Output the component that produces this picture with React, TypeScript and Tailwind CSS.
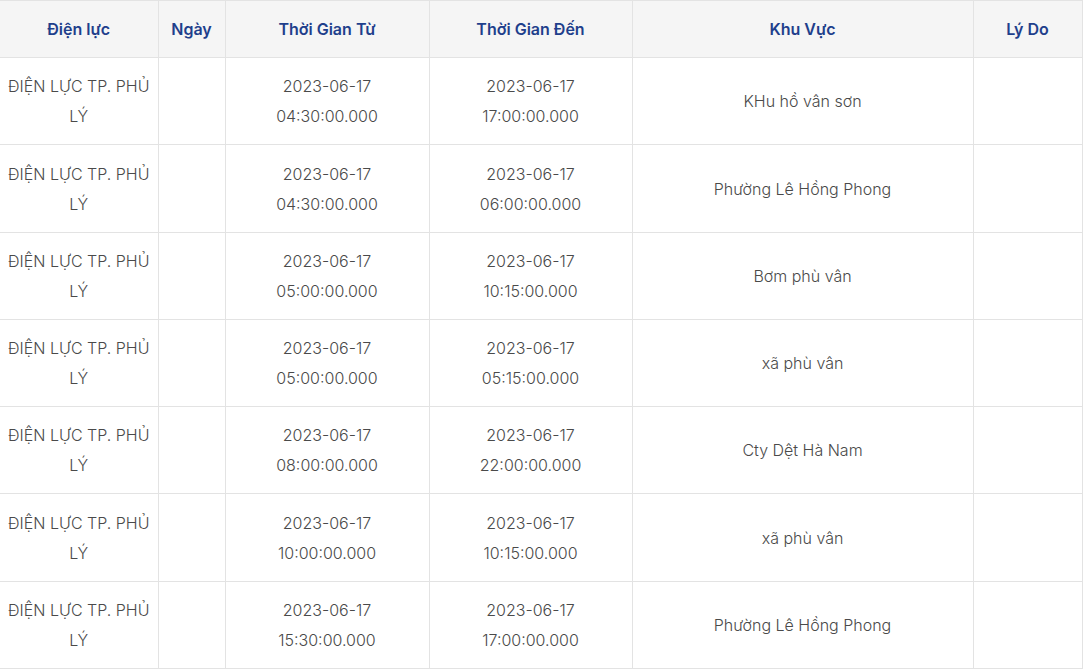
import React from "react";

const rows = [
  ["04:30:00.000", "17:00:00.000", "KHu hồ vân sơn", "h-[87px]"],
  ["04:30:00.000", "06:00:00.000", "Phường Lê Hồng Phong", "h-[88px]"],
  ["05:00:00.000", "10:15:00.000", "Bơm phù vân", "h-[87px]"],
  ["05:00:00.000", "05:15:00.000", "xã phù vân", "h-[87px]"],
  ["08:00:00.000", "22:00:00.000", "Cty Dệt Hà Nam", "h-[87px]"],
  ["10:00:00.000", "10:15:00.000", "xã phù vân", "h-[88px]"],
  ["15:30:00.000", "17:00:00.000", "Phường Lê Hồng Phong", "h-[87px]"],
];

export default function App() {
  return (
    <div className="w-[1083px] h-[672px] overflow-hidden bg-white" style={{ fontFamily: "Inter, 'Noto Sans', sans-serif" }}>
      <table className="table-fixed border-collapse w-[1082px] text-center">
        <colgroup>
          <col className="w-[158px]" />
          <col className="w-[67px]" />
          <col className="w-[204px]" />
          <col className="w-[203px]" />
          <col className="w-[341px]" />
          <col className="w-[109px]" />
        </colgroup>
        <thead>
          <tr className="h-[57px] bg-[#f5f5f5] text-[16px] text-[#1f3f8c]">
            <th className="border border-[#e3e3e3] border-l-0 font-semibold">Điện lực</th>
            <th className="border border-[#e3e3e3] font-semibold">Ngày</th>
            <th className="border border-[#e3e3e3] font-semibold">Thời Gian Từ</th>
            <th className="border border-[#e3e3e3] font-semibold">Thời Gian Đến</th>
            <th className="border border-[#e3e3e3] font-semibold">Khu Vực</th>
            <th className="border border-[#e3e3e3] font-semibold">Lý Do</th>
          </tr>
        </thead>
        <tbody className="text-[16px] leading-[30px] font-light text-[#4a4a4a]">
          {rows.map((r, i) => (
            <tr key={i} className={r[3]}>
              <td className="border border-[#e3e3e3] border-l-0 px-0">ĐIỆN LỰC TP. PHỦ LÝ</td>
              <td className="border border-[#e3e3e3]"></td>
              <td className="border border-[#e3e3e3]">
                2023-06-17
                <br />
                {r[0]}
              </td>
              <td className="border border-[#e3e3e3]">
                2023-06-17
                <br />
                {r[1]}
              </td>
              <td className="border border-[#e3e3e3]">{r[2]}</td>
              <td className="border border-[#e3e3e3]"></td>
            </tr>
          ))}
        </tbody>
      </table>
    </div>
  );
}
